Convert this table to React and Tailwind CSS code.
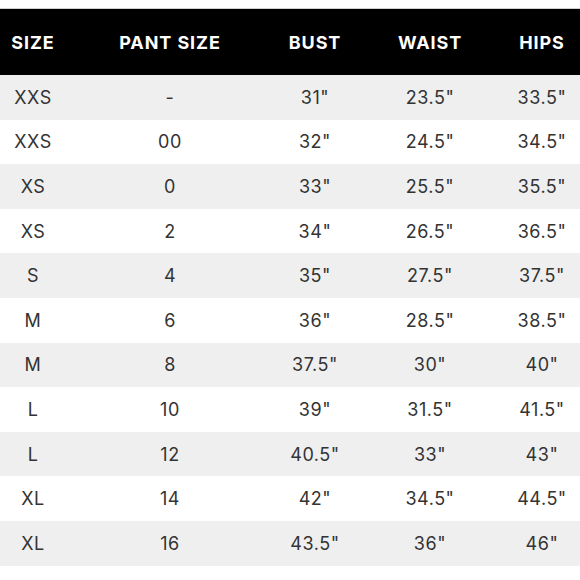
import React from "react";

const rows = [
  ["XXS", "-", '31"', '23.5"', '33.5"'],
  ["XXS", "00", '32"', '24.5"', '34.5"'],
  ["XS", "0", '33"', '25.5"', '35.5"'],
  ["XS", "2", '34"', '26.5"', '36.5"'],
  ["S", "4", '35"', '27.5"', '37.5"'],
  ["M", "6", '36"', '28.5"', '38.5"'],
  ["M", "8", '37.5"', '30"', '40"'],
  ["L", "10", '39"', '31.5"', '41.5"'],
  ["L", "12", '40.5"', '33"', '43"'],
  ["XL", "14", '42"', '34.5"', '44.5"'],
  ["XL", "16", '43.5"', '36"', '46"'],
];

const headers = ["SIZE", "PANT SIZE", "BUST", "WAIST", "HIPS"];

const cols = "grid grid-cols-[66px_208px_82px_148px_76px] items-center";

export default function App() {
  return (
    <div className="w-[580px] h-[580px] bg-white font-['Inter','Liberation_Sans',sans-serif] overflow-hidden">
      <div className="h-[9px] border-b border-[#cfcfcf]" />
      <div className={`${cols} h-[66px] bg-black text-white text-[18px] font-bold tracking-[0.05em]`}>
        {headers.map((h) => (
          <div key={h} className="text-center">{h}</div>
        ))}
      </div>
      {rows.map((r, i) => (
        <div
          key={i}
          className={`${cols} h-[44.6px] text-[18px] text-[#333] tracking-[0.03em] ${i % 2 === 0 ? "bg-[#efefef]" : "bg-white"}`}
        >
          {r.map((c, j) => (
            <div key={j} className="text-center">{c}</div>
          ))}
        </div>
      ))}
    </div>
  );
}
